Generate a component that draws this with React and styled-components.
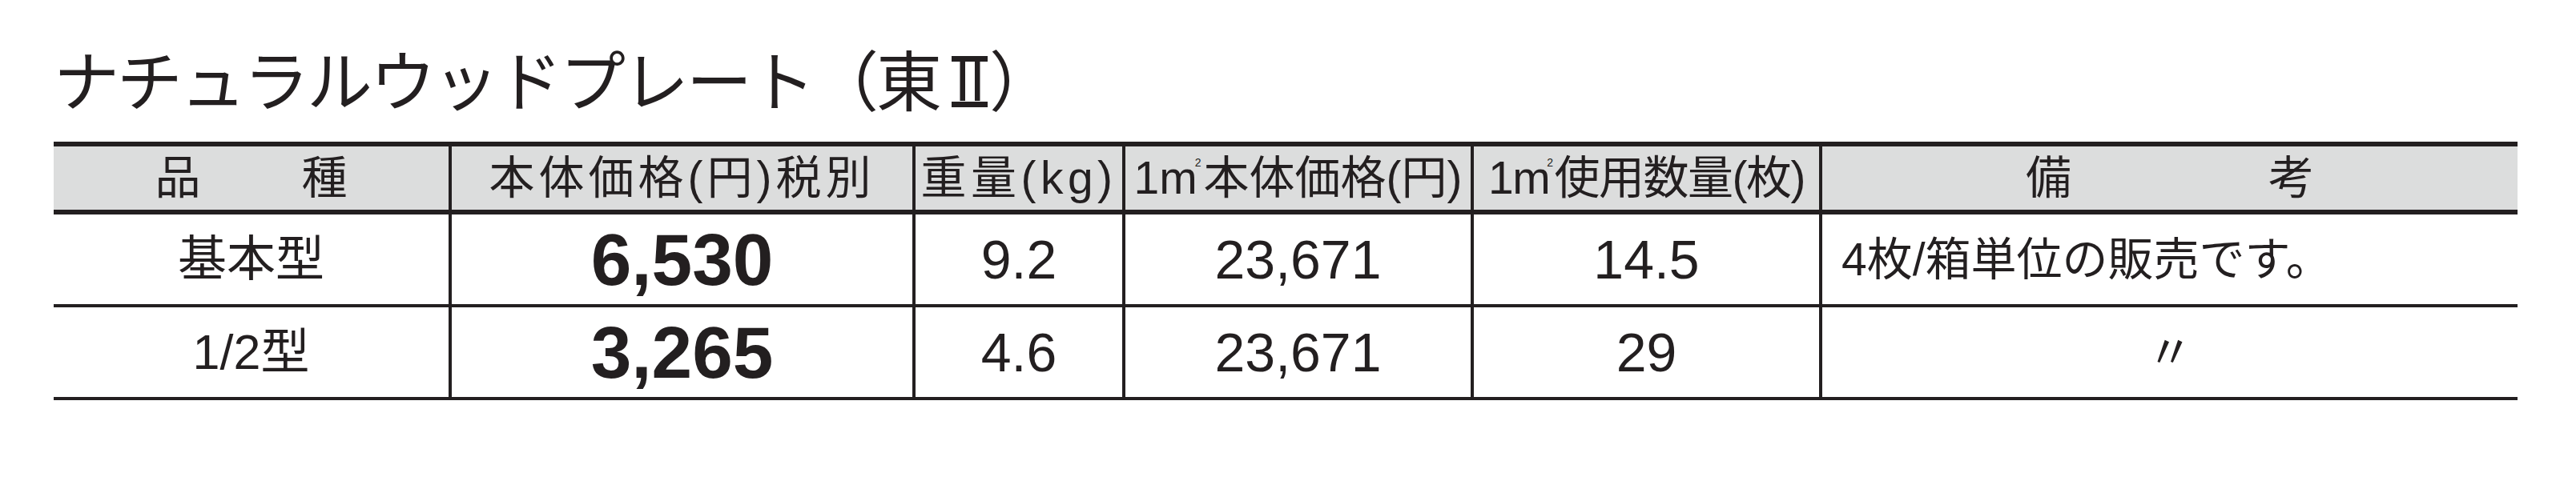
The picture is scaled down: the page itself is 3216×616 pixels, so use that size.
import React from 'react';
import styled, { createGlobalStyle } from 'styled-components';

const ink = '#231f20';
const sans = '"Liberation Sans", "Noto Sans CJK JP", sans-serif';

const GlobalStyle = createGlobalStyle`
  body {
    margin: 0;
    background: #fff;
    color: ${ink};
    font-family: ${sans};
  }
`;

const Page = styled.div`
  width: 3076px;
  padding: 56px 0 0 67px;
`;

const Title = styled.h1`
  margin: 0 0 39px;
  height: 82px;
  font: 400 82px/82px "Noto Sans CJK JP", sans-serif;
  letter-spacing: -3px;
  color: ${ink};
  white-space: nowrap;
`;

// roman numeral two with full-width top and bottom bars, as in the print font
const Roman = styled.span`
  display: inline-block;
  box-sizing: border-box;
  width: 45px;
  height: 64px;
  margin: 0 2px 0 15px;
  border-top: 7px solid ${ink};
  border-bottom: 7px solid ${ink};
  font: 400 70px/50px "Liberation Sans", sans-serif;
  letter-spacing: -1px;
  text-align: center;
  vertical-align: 6px;
`;

const Table = styled.div`
  border-top: 6px solid ${ink};
`;

const Row = styled.div`
  display: grid;
  grid-template-columns: 493px 579px 262px 435px 435px 872px;
  height: ${(p) => (p.$head ? 85 : 116)}px;
  box-sizing: border-box;
  border-bottom: ${(p) => (p.$head ? 6 : 4)}px solid ${ink};
  background: ${(p) => (p.$head ? '#dcdddd' : '#fff')};
`;

const Cell = styled.div`
  display: flex;
  align-items: center;
  justify-content: ${(p) => (p.$left ? 'flex-start' : 'center')};
  padding-left: ${(p) => (p.$left ? 24 : 0)}px;
  border-left: 4px solid ${ink};
  white-space: nowrap;
  &:first-child {
    border-left: none;
  }
`;

const HeadText = styled.span`
  font-size: 57px;
  line-height: 1;
  letter-spacing: ${(p) => p.$ls || 0}px;
`;

const Spread = styled.span`
  display: flex;
  gap: ${(p) => p.$gap}px;
  font-size: 57px;
  line-height: 1;
`;

const Sup = styled.span`
  font-size: 14px;
  line-height: 1;
  vertical-align: 34px;
  margin-left: -3px;
  margin-right: 3px;
`;

const Name = styled.span`
  font-size: 61px;
  line-height: 1;
`;

const Price = styled.span`
  font: 700 91px/1 "Liberation Sans", sans-serif;
`;

const Num = styled.span`
  font: 400 68px/1 "Liberation Sans", sans-serif;
`;

const Note = styled.span`
  font-size: 57px;
  line-height: 1;
`;

const rows = [
  { name: '基本型', price: '6,530', weight: '9.2', unit: '23,671', qty: '14.5', note: '4枚/箱単位の販売です。', left: true },
  { name: '1/2型', price: '3,265', weight: '4.6', unit: '23,671', qty: '29', note: '〃' },
];

export default function App() {
  return (
    <>
      <GlobalStyle />
      <Page>
        <Title>
          ナチュラルウッドプレート（東<Roman>II</Roman>）
        </Title>
        <Table>
          <Row $head>
            <Cell>
              <Spread $gap={126}><span>品</span><span>種</span></Spread>
            </Cell>
            <Cell><HeadText $ls={5}>本体価格(円)税別</HeadText></Cell>
            <Cell><HeadText $ls={5.5}>重量(kg)</HeadText></Cell>
            <Cell><HeadText>1m<Sup>2</Sup>本体価格(円)</HeadText></Cell>
            <Cell><HeadText $ls={-1.5}>1m<Sup>2</Sup>使用数量(枚)</HeadText></Cell>
            <Cell>
              <Spread $gap={246}><span>備</span><span>考</span></Spread>
            </Cell>
          </Row>
          {rows.map((r) => (
            <Row key={r.name}>
              <Cell><Name>{r.name}</Name></Cell>
              <Cell><Price>{r.price}</Price></Cell>
              <Cell><Num>{r.weight}</Num></Cell>
              <Cell><Num>{r.unit}</Num></Cell>
              <Cell><Num>{r.qty}</Num></Cell>
              <Cell $left={r.left}><Note>{r.note}</Note></Cell>
            </Row>
          ))}
        </Table>
      </Page>
    </>
  );
}
